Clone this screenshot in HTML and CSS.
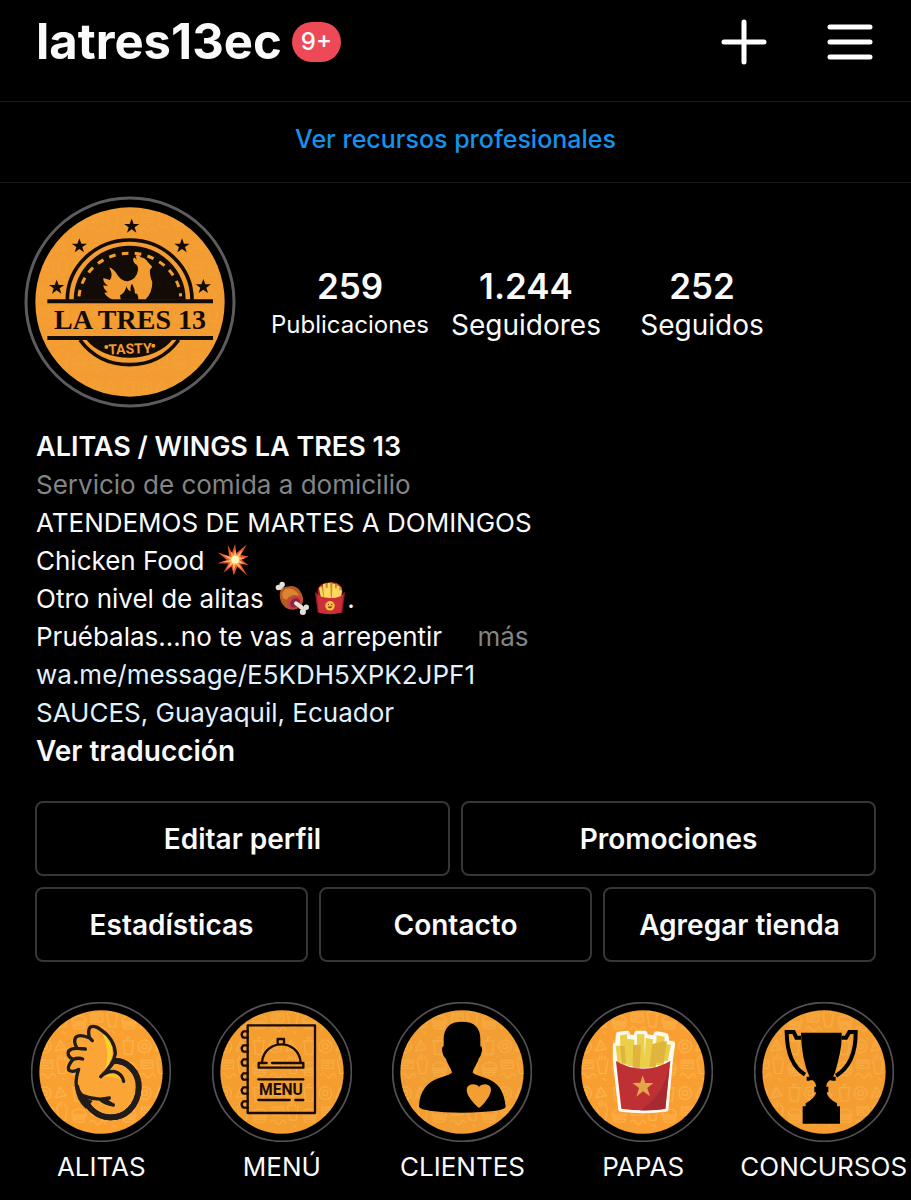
FILE: index.html
```html
<!DOCTYPE html>
<html lang="es">
<head>
<meta charset="utf-8">
<meta name="viewport" content="width=device-width, initial-scale=1">
<title>latres13ec</title>
<link rel="stylesheet" href="styles.css">
</head>
<body>
<svg class="defs" aria-hidden="true">
  <defs>
    <pattern id="doodles" width="150" height="140" patternUnits="userSpaceOnUse">
      <g fill="none" stroke="#ffcb6c" stroke-opacity=".7" stroke-width="3" stroke-linejoin="round" stroke-linecap="round">
        <path d="M12 14h30l-4 40H16zM10 14h34M24 14V4h8"/>
        <circle cx="76" cy="30" r="19"/><circle cx="76" cy="30" r="8"/>
        <path d="M108 44l14-32 18 26zM120 28h4M126 35h3"/>
        <path d="M8 96q0-18 21-18t21 18zM8 102h42M12 108h34q0 9-8 9H20q-8 0-8-9z"/>
        <path d="M66 72h34v24H66zM72 80h22M72 88h14"/>
        <path d="M112 70l8 42h18l6-42M118 70V58M126 70V54M136 70V60"/>
        <path d="M62 118q8-14 16 0t16 0 14 4M130 126l8 6"/>
      </g>
    </pattern>
    <path id="star" d="M0-23 6-7H23L9 3 14 19 0 9-14 19-9 3-23-7H-6Z"/>
  </defs>
</svg>

<header class="topbar">
  <h1 class="username">latres13ec</h1>
  <span class="badge">9+</span>
  <div class="actions">
    <button class="icon-button" type="button" aria-label="Crear">
      <svg viewBox="0 0 46 46"><path d="M23 3v40M3 23h40"/></svg>
    </button>
    <button class="icon-button" type="button" aria-label="Menú">
      <svg viewBox="0 0 46 46"><path d="M3 8h40M3 23h40M3 38h40"/></svg>
    </button>
  </div>
</header>

<div class="resources"><a href="#recursos">Ver recursos profesionales</a></div>

<main>
  <section class="profile">
    <svg class="avatar" viewBox="12 17 636 636" role="img" aria-label="La Tres 13 Tasty">
      <circle cx="330" cy="335" r="312" fill="none" stroke="#5c5c5c" stroke-width="9"/>
      <circle cx="330" cy="335" r="284" fill="#f39c31"/>
      <circle cx="330" cy="335" r="284" fill="url(#doodles)" opacity=".2"/>
      <g fill="#130b05">
        <use href="#star" x="335" y="108"/>
        <use href="#star" x="178" y="167"/>
        <use href="#star" x="486" y="167"/>
        <use href="#star" x="110" y="291"/>
        <use href="#star" x="550" y="289"/>
        <path d="M161 328A168 162 0 0 1 497 328Z"/>
        <path d="M200 449H456A145 100 0 0 1 200 449Z"/>
        <path d="M82 327H579V339H82ZM82 437H579V449H82Z"/>
      </g>
      <g fill="none" stroke="#130b05" stroke-width="11">
        <path d="M142 328A187 179 0 0 1 516 328"/>
        <path d="M180 449Q235 523 328 523T476 449"/>
      </g>
      <path d="M177 318A153 141 0 0 1 482 318" fill="none" stroke="#f39c31" stroke-width="9" stroke-dasharray="20 19"/>
      <g fill="#f39c31">
        <path d="M268 232Q275 231 288 247Q301 272 323 273Q350 267 354 240Q355 224 346 221Q338 215 340 204Q343 199 350 208L347 196Q357 191 362 201Q376 203 384 216L397 229L390 238Q388 253 397 276Q397 307 377 327H355Q355 307 345 310Q345 295 336 280Q330 287 332 303Q321 299 320 287Q315 308 300 315L302 327H277Q259 320 253 307L263 306Q250 296 250 285L264 287Q248 276 250 263L270 269Q281 253 268 232Z"/>
      </g>
      <g font-family="Liberation Serif, serif" font-weight="700" fill="#130b05" text-anchor="middle">
        <text x="330" y="417" font-size="84">LA TRES 13</text>
      </g>
      <g transform="rotate(-2 330 480)" font-family="Roboto, sans-serif" font-weight="700" fill="#f39c31" text-anchor="middle">
        <text x="330" y="490" font-size="42">TASTY</text>
      </g>
      <circle cx="259" cy="470" r="6" fill="#f39c31"/><circle cx="400" cy="466" r="6" fill="#f39c31"/>
    </svg>
    <ul class="stats">
      <li><strong>259</strong><span class="long">Publicaciones</span></li>
      <li><strong>1.244</strong><span>Seguidores</span></li>
      <li><strong>252</strong><span>Seguidos</span></li>
    </ul>
  </section>

  <section class="bio">
    <h2>ALITAS / WINGS LA TRES 13</h2>
    <p class="muted">Servicio de comida a domicilio</p>
    <p>ATENDEMOS DE MARTES A DOMINGOS</p>
    <p>Chicken Food
      <svg class="emoji" viewBox="0 0 96 96" role="img" aria-label="explosión"><path d="M33 5 45 28 54 3 57 29 87 4 70 34 92 38 72 47 91 62 69 59 88 92 60 67 50 92 44 66 21 84 35 58 4 57 31 48 5 27 37 37Z" fill="#e8542c"/><path d="M42 24 50 34 54 17 58 35 74 20 66 40 82 42 66 48 79 59 63 56 74 75 56 61 50 78 47 60 32 71 41 54 18 53 40 47 21 34 44 40Z" fill="#ffb35a"/><circle cx="54" cy="47" r="11" fill="#fff6bd"/></svg></p>
    <p>Otro nivel de alitas
      <svg class="emoji" viewBox="0 0 100 100" role="img" aria-label="carne con hueso"><g stroke="#d8d3cc" stroke-width="11" stroke-linecap="round"><path d="M13 17 27 28M72 75 86 84"/></g><g fill="#e4e0da"><circle cx="10" cy="19" r="8"/><circle cx="21" cy="10" r="8"/><circle cx="82" cy="91" r="9"/><circle cx="92" cy="77" r="8"/></g><path d="M14 40Q14 17 38 16Q66 10 79 38Q91 66 68 80Q40 91 25 72Q14 60 14 40Z" fill="#b9591f"/><path d="M22 34Q31 18 48 23Q66 30 70 43Q46 37 34 55Q18 53 22 34Z" fill="#dc8435"/><ellipse cx="58" cy="64" rx="22" ry="18" transform="rotate(-42 58 64)" fill="#c63d51"/><ellipse cx="59" cy="64" rx="16" ry="12" transform="rotate(-42 59 64)" fill="#8d2638"/><path d="M62 66 78 77" stroke="#e9e3dc" stroke-width="12" stroke-linecap="round"/></svg>
      <svg class="emoji" viewBox="0 0 100 100" role="img" aria-label="papas fritas"><path d="M13 31Q15 5 50 4T87 31L82 60H18Z" fill="#b81e28"/><g stroke="#c58b25" stroke-width="11" stroke-linecap="round"><path d="M25 20 32 57M39 11 43 57M54 9 54 57M68 13 64 57M79 22 72 57"/></g><g stroke="#ffd862" stroke-width="8" stroke-linecap="round"><path d="M22 22 29 57M33 12 38 57M47 9 49 57M61 11 59 57M74 17 69 57M81 30 77 57M41 24 46 57M66 25 61 57"/></g><path d="M7 32Q17 49 50 50T93 32L85 93Q50 102 15 93Z" fill="#cc2f38"/><path d="M8 34 16 93M92 34 84 93" stroke="#981a26" stroke-width="4"/><circle cx="50" cy="73" r="14" fill="#f3c43d"/><path d="M43 75Q50 86 57 75Z" fill="#8a321c"/><circle cx="45" cy="69" r="2" fill="#8a321c"/><circle cx="55" cy="69" r="2" fill="#8a321c"/></svg>.</p>
    <p>Pruébalas...no te vas a arrepentir <a class="muted more" href="#mas">más</a></p>
    <p><a class="soft" href="#mensaje">wa.me/message/E5KDH5XPK2JPF1</a></p>
    <p><a class="soft" href="#lugar">SAUCES, Guayaquil, Ecuador</a></p>
    <p class="translate"><a href="#traduccion">Ver traducción</a></p>
  </section>

  <section class="buttons">
    <div class="button-row">
      <button type="button">Editar perfil</button>
      <button type="button">Promociones</button>
    </div>
    <div class="button-row">
      <button type="button">Estadísticas</button>
      <button type="button">Contacto</button>
      <button type="button">Agregar tienda</button>
    </div>
  </section>

  <nav class="highlights" aria-label="Historias destacadas">
    <a href="#alitas">
      <svg viewBox="35 37 420 420" aria-hidden="true">
        <circle cx="245" cy="247" r="208" fill="none" stroke="#535155" stroke-width="5"/>
        <circle cx="245" cy="247" r="185" fill="#f9a031"/><circle cx="245" cy="247" r="185" fill="url(#doodles)" opacity=".8"/>
        <path d="M282 214C322 210 360 247 358 294C356 350 316 386 270 383C228 380 204 350 193 323Z" fill="#fba536" stroke="#211b1a" stroke-width="17"/>
        <path d="M270 318Q230 334 190 318C168 304 166 274 178 239Q160 250 148 241Q143 230 161 209Q141 199 148 184Q157 175 174 176Q160 156 170 142Q182 132 211 145Q204 125 212 113Q224 105 243 119C276 141 287 164 288 192Q282 226 244 261L340 262L350 310L300 350Z" fill="#fba536"/>
        <path d="M247 121C282 148 286 196 259 237Q278 190 247 121Z" fill="#ffd02c" stroke="#ffd02c" stroke-width="4"/>
        <path d="M244 262Q270 240 300 256L313 275Q278 256 244 262Z" fill="#ffc02e"/>
        <path d="M282 214C322 210 360 247 358 294C356 350 316 386 270 383C228 380 204 350 193 323" fill="none" stroke="#211b1a" stroke-width="17"/>
        <path d="M270 325Q230 334 190 318C168 304 166 274 178 239Q160 250 148 241Q143 230 161 209Q178 203 190 208M161 209Q141 199 148 184Q157 175 174 176L198 178M174 176Q160 156 170 142Q182 132 211 145L219 153M211 145Q204 125 212 113Q224 105 243 119C276 141 287 164 288 192Q282 226 244 261Q262 243 286 246Q308 252 313 275M242 329Q258 343 282 346M256 328Q267 339 282 346" fill="none" stroke="#211b1a" stroke-width="10" stroke-linecap="round" stroke-linejoin="round"/>
        <path d="M167 285Q169 331 200 358L220 334Q184 322 178 285Z" fill="#211b1a"/>
      </svg>
      <span>ALITAS</span>
    </a>
    <a href="#menu">
      <svg viewBox="36 37 420 420" aria-hidden="true">
        <circle cx="246" cy="247" r="208" fill="none" stroke="#535155" stroke-width="5"/>
        <circle cx="246" cy="247" r="185" fill="#f39e2f"/><circle cx="246" cy="247" r="185" fill="url(#doodles)" opacity=".6"/>
        <g fill="none" stroke="#1b0b04" stroke-width="7" stroke-linejoin="round" stroke-linecap="round">
          <path d="M143 107H345V370H143Z"/>
          <path d="M143 125H130Q120 135 130 144H143M143 167H130Q120 177 130 186H143M143 209H130Q120 219 130 228H143M143 251H130Q120 261 130 270H143M143 293H130Q120 303 130 312H143M143 335H130Q120 345 130 354H143"/>
          <path d="M176 220H200M216 220H310V234H176V220M186 218C192 146 296 146 302 218M233 162V148H252V162M175 269H310M175 331H269M286 331H310"/>
        </g>
        <text x="243" y="317" text-anchor="middle" font-family="Roboto, sans-serif" font-weight="700" font-size="47" fill="#1b0b04">MENU</text>
      </svg>
      <span>MENÚ</span>
    </a>
    <a href="#clientes">
      <svg viewBox="37 37 420 420" aria-hidden="true">
        <circle cx="247" cy="247" r="208" fill="none" stroke="#535155" stroke-width="5"/>
        <circle cx="247" cy="247" r="185" fill="#f39e32"/><circle cx="247" cy="247" r="185" fill="url(#doodles)" opacity=".6"/>
        <path d="M247 96C285 96 302 114 302 149V169Q310 171 306 188Q303 202 297 207C292 226 281 233 279 249C300 264 339 264 359 293Q375 316 378 352Q372 367 248 369Q125 367 118 351Q118 318 137 293C157 264 196 264 217 249C214 233 204 226 199 207Q192 203 188 188Q185 171 192 169V149C193 114 210 96 247 96Z"/>
        <path d="M298 355Q283 345 267 320C254 296 265 285 279 284Q294 284 298 292Q303 284 318 284C334 286 339 298 328 320Q313 345 298 355Z" fill="#f39e32"/>
      </svg>
      <span>CLIENTES</span>
    </a>
    <a href="#papas">
      <svg viewBox="40 37 420 420" aria-hidden="true">
        <circle cx="250" cy="247" r="208" fill="none" stroke="#535155" stroke-width="5"/>
        <circle cx="250" cy="247" r="185" fill="#f99f31"/><circle cx="250" cy="247" r="185" fill="url(#doodles)" opacity=".8"/>
        <path d="M168 213V167H175L177 135 202 132 204 142 229 145 232 132H255L258 142 286 145 291 133 318 138 321 160 338 163 331 213 318 358Q251 366 184 358Z" fill="#fffaf0" stroke="#fffaf0" stroke-width="17" stroke-linejoin="round"/>
        <path d="M168 169 184 167 183 220H174ZM181 137 202 134 208 225H184ZM202 147 224 150 226 229H205ZM232 133 254 134 256 235H232ZM258 145 280 149 274 234H254ZM291 137 315 141 312 226H285ZM316 162 334 165 324 215H310Z" fill="#eccf48"/>
        <path d="M181 169 195 169 199 221H187ZM220 165H244L240 237H219ZM278 163 298 158 288 233H269ZM299 156 322 155 312 219H290Z" fill="#dfb53d"/>
        <path d="M169 214Q206 237 250 237T332 214L317 357Q250 367 185 357Z" fill="#bf3034"/>
        <path d="M322 254Q305 322 241 362Q288 363 317 357L329 230Z" fill="#a82a31"/>
        <path d="M249 257 257 280H281L263 295 271 320 250 305 230 321 238 295 218 280 242 279Z" fill="#e2a548"/>
      </svg>
      <span>PAPAS</span>
    </a>
    <a href="#concursos">
      <svg viewBox="56 37 420 420" aria-hidden="true">
        <circle cx="266" cy="247" r="208" fill="none" stroke="#535155" stroke-width="5"/>
        <circle cx="266" cy="247" r="185" fill="#f49e32"/><circle cx="266" cy="247" r="185" fill="url(#doodles)" opacity=".6"/>
        <path d="M197 129H319Q321 165 308 215 299 255 288 272H283Q272 281 273 291H279V308H274Q276 326 305 341V350H314V402H202V350H211V341Q239 326 243 308H237V291H243Q243 281 233 272H218V263H223Q198 207 197 129Z"/>
        <path d="M197 144H183L175 127H154Q155 222 209 255M319 144H332L342 127H361Q362 222 302 258M214 267H223M288 267H301" fill="none" stroke="#000" stroke-width="12"/>
      </svg>
      <span>CONCURSOS</span>
    </a>
  </nav>
</main>
</body>
</html>
```
FILE: styles.css
```css
* {
  box-sizing: border-box;
}

body {
  margin: 0;
  background: #000;
  color: #fafafa;
  font-family: Inter, "Liberation Sans", sans-serif;
  font-size: 26px;
  line-height: 38px;
  overflow-x: hidden;
}

h1, h2, p, ul {
  margin: 0;
  padding: 0;
}

a {
  color: inherit;
  text-decoration: none;
}

button {
  margin: 0;
  background: none;
  color: inherit;
  font: inherit;
  cursor: pointer;
}

.defs {
  display: block;
  width: 0;
  height: 0;
}

.topbar {
  display: flex;
  align-items: center;
  padding: 12px 38px 29px 36px;
  border-bottom: 1px solid #1c1c1c;
}

.username {
  font-size: 49px;
  font-weight: 700;
  line-height: 60px;
}

.badge {
  margin-left: 10px;
  padding: 0 9px;
  border-radius: 20px;
  background: #ed4956;
  font-size: 24px;
  font-weight: 500;
  line-height: 40px;
}

.actions {
  display: flex;
  gap: 60px;
  margin-left: auto;
}

.icon-button {
  width: 46px;
  height: 46px;
  padding: 0;
  border: 0;
}

.icon-button svg {
  display: block;
  fill: none;
  stroke: #fff;
  stroke-width: 5;
  stroke-linecap: round;
}

.resources {
  padding: 18px 36px 24px;
  border-bottom: 1px solid #1c1c1c;
  color: #1593ec;
  font-size: 25px;
  font-weight: 500;
  text-align: center;
}

.profile {
  display: flex;
  align-items: center;
  gap: 26px;
  padding: 13px 24px 0;
}

.avatar {
  flex: none;
  width: 212px;
  height: 212px;
}

.stats {
  display: flex;
  flex: 0 1 528px;
  padding-top: 6px;
  font-size: 28px;
  list-style: none;
  text-align: center;
}

.stats li {
  display: flex;
  flex: 1 1 0;
  flex-direction: column;
}

.stats strong {
  font-size: 35px;
  font-weight: 600;
  line-height: 40px;
}

.stats .long {
  font-size: 24px;
}

.bio {
  padding: 20px 36px 31px;
}

.bio h2 {
  font-size: 27px;
  font-weight: 600;
}

.muted {
  color: #848484;
}

.more {
  margin-left: 28px;
}

.soft {
  color: #e0f1ff;
}

.translate {
  font-size: 28px;
  font-weight: 600;
}

.emoji {
  width: 34px;
  height: 34px;
  margin-left: 4px;
  vertical-align: -7px;
}

.emoji + .emoji {
  margin-left: -3px;
}

.buttons {
  display: flex;
  flex-direction: column;
  gap: 11px;
  padding: 0 35px;
}

.button-row {
  display: flex;
  gap: 11px;
}

.button-row button {
  flex: 1 1 0;
  min-width: 0;
  padding: 17px 0 16px;
  border: 2px solid #363636;
  border-radius: 8px;
  font-size: 28px;
  font-weight: 600;
}

.highlights {
  display: grid;
  grid-template-columns: repeat(5, 1fr);
  margin: 40px -3px 0 11px;
}

.highlights a {
  display: flex;
  flex-direction: column;
  align-items: center;
  gap: 10px;
  font-size: 26px;
  line-height: 30px;
}

.highlights svg {
  width: 140px;
  height: 140px;
}
```
